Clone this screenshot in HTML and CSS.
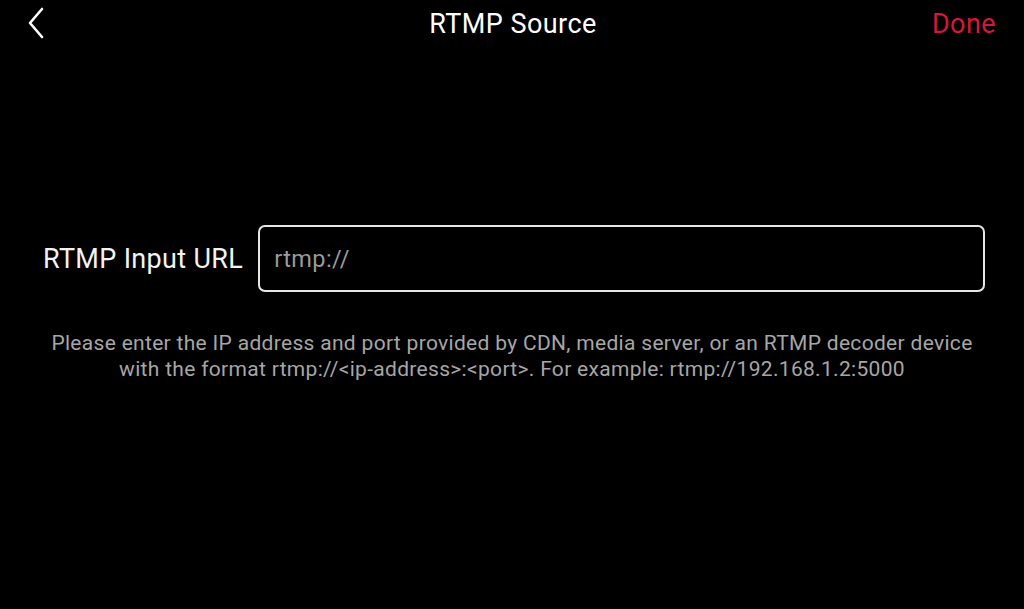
FILE: index.html
```html
<!DOCTYPE html>
<html>
<head>
<meta charset="utf-8">
<link rel="stylesheet" href="styles.css">
</head>
<body>
<div class="screen">
  <header class="topbar">
    <button class="back" aria-label="Back">
      <svg width="20" height="32" viewBox="0 0 20 32"><polyline points="16,2 4,16 16,30" fill="none" stroke="#fff" stroke-width="2.6" stroke-linecap="round" stroke-linejoin="round"/></svg>
    </button>
    <h1 class="title">RTMP Source</h1>
    <button class="done">Done</button>
  </header>
  <main class="content">
    <div class="field">
      <label class="label" for="url">RTMP Input URL</label>
      <div class="input-box"><input id="url" class="input" type="text" placeholder="rtmp://"></div>
    </div>
    <p class="help">Please enter the IP address and port provided by CDN, media server, or an RTMP decoder device<br>with the format rtmp://&lt;ip-address&gt;:&lt;port&gt;. For example: rtmp://192.168.1.2:5000</p>
  </main>
</div>
</body>
</html>
```
FILE: styles.css
```css
html, body {
  margin: 0;
  padding: 0;
  background: #000;
  font-family: Roboto, "Liberation Sans", sans-serif;
  color: #fff;
}
.screen {
  width: 1024px;
  height: 609px;
  overflow: hidden;
}
.topbar {
  height: 48px;
  display: grid;
  grid-template-columns: 1fr auto 1fr;
  align-items: center;
  padding: 0 28px 0 30px;
}
.back {
  justify-self: start;
  background: none;
  border: 0;
  padding: 0;
  display: flex;
  margin-top: -2px;
  margin-left: -4px;
}
.title {
  margin: 0;
  font-size: 27px;
  font-weight: 400;
  letter-spacing: 0.45px;
  color: #fff;
}
.done {
  justify-self: end;
  background: none;
  border: 0;
  padding: 0;
  font-family: inherit;
  font-size: 27px;
  letter-spacing: 0.43px;
  color: #d4173c;
}
.content {
  padding-top: 177px;
}
.field {
  display: flex;
  align-items: center;
  padding: 0 39px 0 43px;
  gap: 15px;
}
.label {
  font-size: 27px;
  letter-spacing: 0.33px;
  color: #f2f2f2;
  white-space: nowrap;
}
.input-box {
  flex: 1;
  height: 63px;
  border: 2px solid #e6e6e6;
  border-radius: 7px;
  display: flex;
  align-items: center;
}
.input {
  flex: 1;
  background: transparent;
  border: 0;
  outline: none;
  padding: 0 0 0 14px;
  font-family: inherit;
  font-size: 23.5px;
  letter-spacing: 0.45px;
  color: #fff;
}
.input::placeholder {
  color: #9a9a9a;
}
.help {
  margin: 38px 0 0;
  text-align: center;
  font-size: 21px;
  letter-spacing: 0.31px;
  line-height: 26px;
  color: #a6a6a6;
}
```
